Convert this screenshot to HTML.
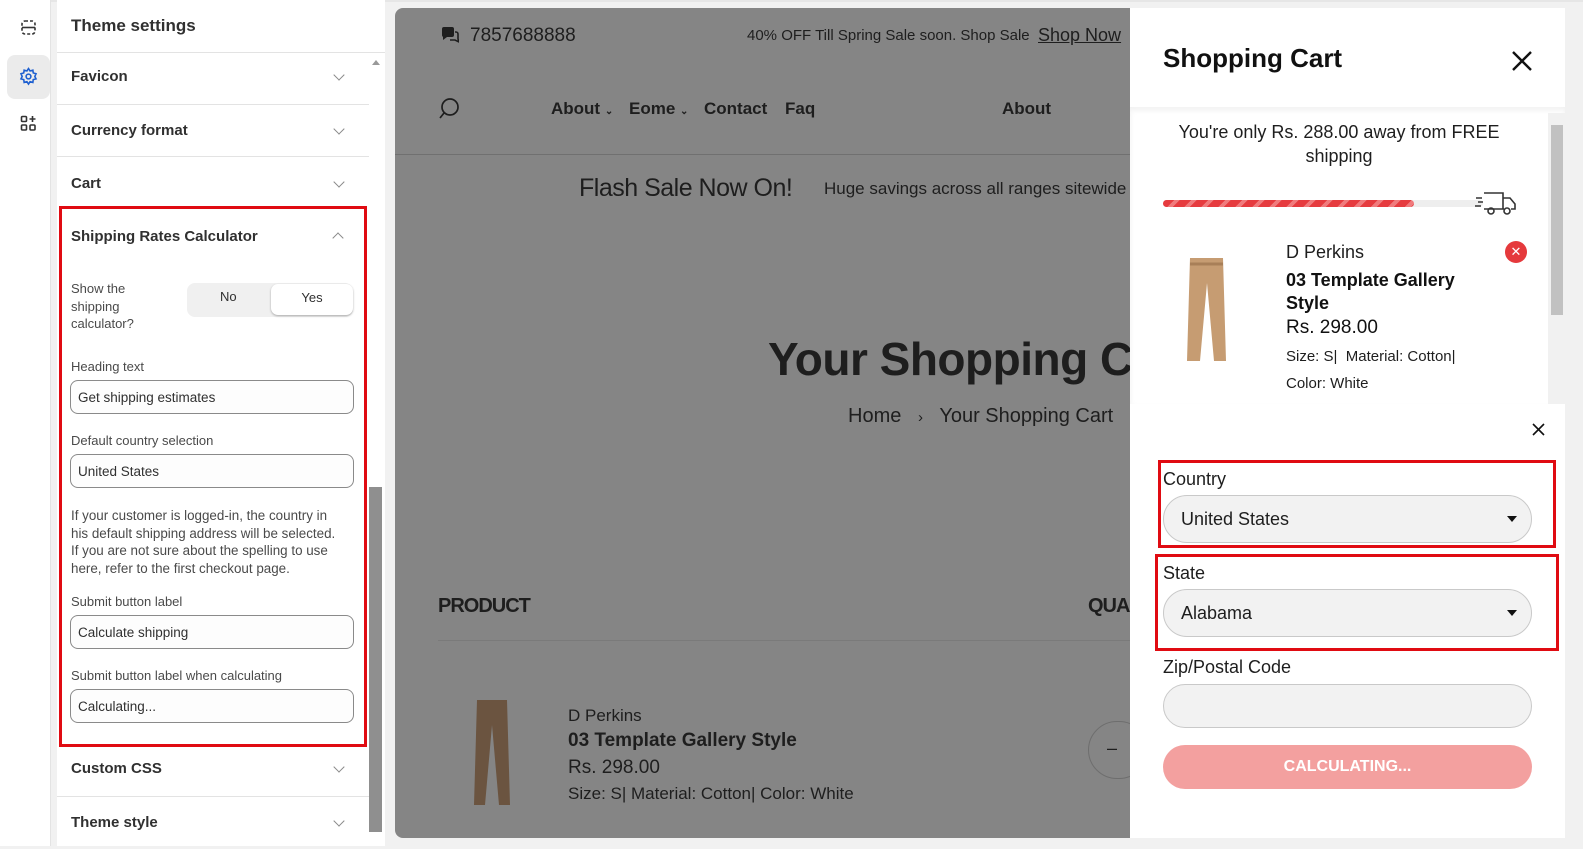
<!DOCTYPE html>
<html><head><meta charset="utf-8"><style>
*{box-sizing:border-box;margin:0;padding:0}
body{width:1583px;height:846px;overflow:hidden;background:#f1f1f1;font-family:"Liberation Sans",sans-serif;position:relative;color:#303030}
.a{position:absolute}
.rail{left:0;top:0;width:51px;height:846px;background:#fff;border-right:1px solid #e3e3e3}
.panel{left:57px;top:0;width:328px;height:846px;background:#fff}
.sec{position:absolute;left:0;width:312px;border-top:1px solid #e3e3e3;font-weight:bold;font-size:15px;color:#303030;padding-left:14px}
.chev{position:absolute;right:26px;width:8px;height:8px;border-right:1.5px solid #8a8a8a;border-bottom:1.5px solid #8a8a8a;transform:rotate(45deg)}
.lbl{position:absolute;left:14px;font-size:13px;color:#4a4a4a;white-space:nowrap}
.inp{position:absolute;left:13px;width:284px;height:34px;border:1px solid #8a8a8a;border-radius:8px;font-size:13.5px;color:#303030;padding:9px 0 0 7px;background:#fdfdfd;white-space:nowrap}
.pv{left:395px;top:8px;width:740px;height:830px;background:#858585;border-radius:8px 0 0 8px;color:#1e1e1e}
.drawer{left:1130px;top:8px;width:435px;height:830px;background:#fff}
.sel{position:absolute;left:33px;width:369px;height:48px;border:1px solid #c9c9c9;border-radius:24px;background:#f2f2f2;font-size:18px;color:#1e1e1e;padding:13px 0 0 17px}
.tri{position:absolute;right:14px;top:20px;width:0;height:0;border-left:5px solid transparent;border-right:5px solid transparent;border-top:6px solid #111}
.red{position:absolute;border:3px solid #e00b12}
</style></head><body>
<div class="a" style="left:0;top:0;width:1583px;height:2px;background:#e6e6e6"></div>
<div class="a rail">
 <svg class="a" style="left:20px;top:19px" width="17" height="17" viewBox="0 0 17 17" fill="none" stroke="#333" stroke-width="1.6"><rect x="2" y="2" width="13" height="13" rx="3" stroke-dasharray="3 2"/><line x1="2" y1="8.5" x2="15" y2="8.5"/></svg>
 <div class="a" style="left:7px;top:55px;width:43px;height:44px;background:#ebebeb;border-radius:8px"></div>
 <svg class="a" style="left:19px;top:67px" width="19" height="19" viewBox="0 0 24 24" fill="none" stroke="#1d5fd0" stroke-width="2"><circle cx="12" cy="12" r="3"/><path d="M12 2l2 3 3.5-1 .5 3.5 3.5 1-1.5 3.5 1.5 3-3.5 1-.5 3.5-3.5-1-2 3-2-3-3.5 1-.5-3.5-3.5-1 1.5-3-1.5-3.5 3.5-1 .5-3.5 3.5 1z"/></svg>
 <svg class="a" style="left:20px;top:115px" width="17" height="17" viewBox="0 0 17 17" fill="none" stroke="#333" stroke-width="1.6"><rect x="1.5" y="1.5" width="5" height="5" rx="1"/><rect x="1.5" y="10" width="5" height="5" rx="1"/><rect x="10" y="10" width="5" height="5" rx="1"/><path d="M12.5 1v6M9.5 4h6"/></svg>
</div>
<div class="a panel">
 <div class="a" style="left:14px;top:16px;font-size:17px;font-weight:bold;color:#303030">Theme settings</div>
 <div class="a" style="left:0;top:52px;width:328px;height:1px;background:#e3e3e3"></div>
 <div class="a" style="left:315px;top:60px;width:0;height:0;border-left:4px solid transparent;border-right:4px solid transparent;border-bottom:5px solid #999"></div>
 <div class="sec" style="top:52px;height:52px;padding-top:15px">Favicon<div class="chev" style="top:18px"></div></div>
 <div class="sec" style="top:104px;height:52px;padding-top:17px">Currency format<div class="chev" style="top:20px"></div></div>
 <div class="sec" style="top:156px;height:52px;padding-top:18px">Cart<div class="chev" style="top:21px"></div></div>
 <div class="sec" style="top:743px;height:53px;padding-top:17px;border-top:none">Custom CSS<div class="chev" style="top:20px"></div></div>
 <div class="sec" style="top:796px;height:53px;padding-top:17px">Theme style<div class="chev" style="top:20px"></div></div>
 <div class="a" style="left:312px;top:487px;width:13px;height:345px;background:#8f8f8f"></div>
</div>
<div class="red" style="left:59px;top:206px;width:308px;height:541px"></div>
<div class="a" style="left:71px;top:228px;font-size:15px;font-weight:bold;color:#303030">Shipping Rates Calculator</div>
<div class="a" style="left:334px;top:234px;width:8px;height:8px;border-left:1.5px solid #8a8a8a;border-top:1.5px solid #8a8a8a;transform:rotate(45deg)"></div>
<div class="a" style="left:71px;top:280px;font-size:13px;color:#4a4a4a;line-height:17.5px">Show the<br>shipping<br>calculator?</div>
<div class="a" style="left:187px;top:283px;width:166px;height:34px;background:#f0f0f0;border-radius:8px"></div>
<div class="a" style="left:220px;top:289px;font-size:13px">No</div>
<div class="a" style="left:271px;top:284px;width:82px;height:31px;background:#fff;border-radius:7px;box-shadow:0 1px 2px rgba(0,0,0,.3);font-size:13px;text-align:center;padding-top:6px">Yes</div>
<div style="position:absolute;left:57px;top:0;width:310px;height:846px">
 <div class="lbl" style="top:359px">Heading text</div>
 <div class="inp" style="top:380px">Get shipping estimates</div>
 <div class="lbl" style="top:433px">Default country selection</div>
 <div class="inp" style="top:454px">United States</div>
 <div class="lbl" style="top:507px;line-height:17.5px;font-size:13.4px">If your customer is logged-in, the country in<br>his default shipping address will be selected.<br>If you are not sure about the spelling to use<br>here, refer to the first checkout page.</div>
 <div class="lbl" style="top:594px">Submit button label</div>
 <div class="inp" style="top:615px">Calculate shipping</div>
 <div class="lbl" style="top:668px">Submit button label when calculating</div>
 <div class="inp" style="top:689px">Calculating...</div>
</div>

<div class="a pv">
 <svg class="a" style="left:46px;top:19px" width="18" height="16" viewBox="0 0 18 16"><path d="M1 2a2 2 0 012-2h8a2 2 0 012 2v6a2 2 0 01-2 2H6l-4 3V10a2 2 0 01-1-2z" fill="#1e1e1e"/><path d="M14 5h1a2 2 0 012 2v5l1 3-4-2H9" fill="none" stroke="#1e1e1e" stroke-width="1.6"/></svg>
 <div class="a" style="left:75px;top:17px;font-size:19px">7857688888</div>
 <div class="a" style="left:352px;top:19px;font-size:15px">40% OFF Till Spring Sale soon. Shop Sale</div>
 <div class="a" style="left:643px;top:17px;font-size:18px;text-decoration:underline">Shop Now</div>
 <svg class="a" style="left:43px;top:90px" width="22" height="22" viewBox="0 0 22 22" fill="none" stroke="#1e1e1e" stroke-width="1.7"><circle cx="12" cy="9" r="8"/><path d="M6 15l-4 5"/></svg>
 <div class="a" style="left:156px;top:91px;font-size:17px;font-weight:bold">About <span style="font-size:10px">⌄</span></div>
 <div class="a" style="left:234px;top:91px;font-size:17px;font-weight:bold">Eome <span style="font-size:10px">⌄</span></div>
 <div class="a" style="left:309px;top:91px;font-size:17px;font-weight:bold">Contact</div>
 <div class="a" style="left:390px;top:91px;font-size:17px;font-weight:bold">Faq</div>
 <div class="a" style="left:607px;top:91px;font-size:17px;font-weight:bold">About</div>
 <div class="a" style="left:0;top:146px;width:740px;height:1px;background:#707070"></div>
 <div class="a" style="left:184px;top:166px;font-size:25px;letter-spacing:-.5px">Flash Sale Now On!</div>
 <div class="a" style="left:429px;top:171px;font-size:17px;white-space:nowrap">Huge savings across all ranges sitewide</div>
 <div class="a" style="left:373px;top:324px;font-size:46px;font-weight:bold;white-space:nowrap;letter-spacing:-.5px">Your Shopping C</div>
 <div class="a" style="left:453px;top:397px;font-size:20px;white-space:nowrap">Home &nbsp;&nbsp;<span style="font-size:15px">›</span>&nbsp;&nbsp; Your Shopping Cart</div>
 <div class="a" style="left:43px;top:587px;font-size:20px;font-weight:bold;letter-spacing:-1px">PRODUCT</div>
 <div class="a" style="left:693px;top:587px;font-size:20px;font-weight:bold;letter-spacing:-1px">QUA</div>
 <div class="a" style="left:43px;top:632px;width:697px;height:1px;background:#7a7a7a"></div>
 <svg class="a" style="left:77px;top:690px" width="40" height="110" viewBox="0 0 40 110"><path d="M5 2h30l3 105h-11l-7-80-7 80H2z" fill="#6b5440"/></svg>
 <div class="a" style="left:173px;top:698px;font-size:17px">D Perkins</div>
 <div class="a" style="left:173px;top:722px;font-size:19px;font-weight:bold">03 Template Gallery Style</div>
 <div class="a" style="left:173px;top:749px;font-size:19px">Rs. 298.00</div>
 <div class="a" style="left:173px;top:776px;font-size:17px">Size: S| Material: Cotton| Color: White</div>
 <div class="a" style="left:693px;top:713px;width:60px;height:58px;border:1px solid #6e6e6e;border-radius:29px"></div>
 <div class="a" style="left:712px;top:730px;font-size:18px">–</div>
</div>

<div class="a drawer">
 <div class="a" style="left:33px;top:35px;font-size:26px;font-weight:bold;color:#111">Shopping Cart</div>
 <svg class="a" style="left:381px;top:42px" width="22" height="22" viewBox="0 0 22 22" stroke="#111" stroke-width="2.4"><path d="M2 2l18 18M20 2L2 20"/></svg>
 <div class="a" style="left:0;top:99px;width:435px;height:297px;background:#fff;box-shadow:inset 0 3px 6px rgba(0,0,0,.06)"></div>
 <div class="a" style="left:0;top:112px;width:418px;text-align:center;font-size:18px;line-height:24px;color:#1e1e1e">You're only Rs. 288.00 away from FREE<br>shipping</div>
 <div class="a" style="left:33px;top:192px;width:320px;height:7px;border-radius:4px;background:#eee"></div>
 <div class="a" style="left:33px;top:192px;width:251px;height:7px;border-radius:4px;background:repeating-linear-gradient(135deg,#e63b3f 0 8px,#f07b7d 8px 12px)"></div>
 <svg class="a" style="left:344px;top:182px" width="43" height="26" viewBox="0 0 43 26" fill="none" stroke="#333" stroke-width="1.6"><path d="M10 3h19v16H10M29 8h7l5 6v5h-4M10 19h4M22 19h8"/><circle cx="17" cy="21" r="3"/><circle cx="33" cy="21" r="3"/><path d="M2 8h6M4 12h5M1 16h6"/></svg>
 <svg class="a" style="left:55px;top:248px" width="45" height="110" viewBox="0 0 45 110"><path d="M5 2h33l3 103h-12l-7-78-7 78H2z" fill="#c69c72"/><path d="M5 8h33" stroke="#a87f58" stroke-width="3"/></svg>
 <div class="a" style="left:156px;top:234px;font-size:18px;color:#1e1e1e">D Perkins</div>
 <div class="a" style="left:156px;top:261px;font-size:18px;font-weight:bold;line-height:23px;color:#111">03 Template Gallery<br>Style</div>
 <div class="a" style="left:156px;top:309px;font-size:19px;color:#111">Rs. 298.00</div>
 <div class="a" style="left:156px;top:340px;font-size:15px;color:#1e1e1e">Size: S|&nbsp; Material: Cotton|</div>
 <div class="a" style="left:156px;top:367px;font-size:15px;color:#1e1e1e">Color: White</div>
 <div class="a" style="left:375px;top:233px;width:22px;height:22px;border-radius:11px;background:#e5393c;color:#fff;font-size:13px;text-align:center;line-height:21px">✕</div>
 <div class="a" style="left:418px;top:105px;width:17px;height:291px;background:#f1f1f1"></div>
 <div class="a" style="left:421px;top:117px;width:12px;height:190px;background:#c1c1c1"></div>
 <div class="a" style="left:0;top:396px;width:435px;height:434px;background:#fff"></div>
 <svg class="a" style="left:402px;top:415px" width="13" height="13" viewBox="0 0 13 13" stroke="#111" stroke-width="1.6"><path d="M1 1l11 11M12 1L1 12"/></svg>
 <div class="a" style="left:33px;top:461px;font-size:18px;color:#1e1e1e">Country</div>
 <div class="sel" style="top:487px">United States<div class="tri"></div></div>
 <div class="a" style="left:33px;top:555px;font-size:18px;color:#1e1e1e">State</div>
 <div class="sel" style="top:581px">Alabama<div class="tri"></div></div>
 <div class="a" style="left:33px;top:649px;font-size:18px;color:#1e1e1e">Zip/Postal Code</div>
 <div class="sel" style="top:676px;height:44px"></div>
 <div class="a" style="left:33px;top:737px;width:369px;height:44px;border-radius:22px;background:#f3a09f;color:#fff;font-weight:bold;font-size:16px;text-align:center;line-height:44px">CALCULATING...</div>
</div>
<div class="red" style="left:1158px;top:460px;width:398px;height:88px"></div>
<div class="red" style="left:1155px;top:554px;width:404px;height:97px"></div>
</body></html>
